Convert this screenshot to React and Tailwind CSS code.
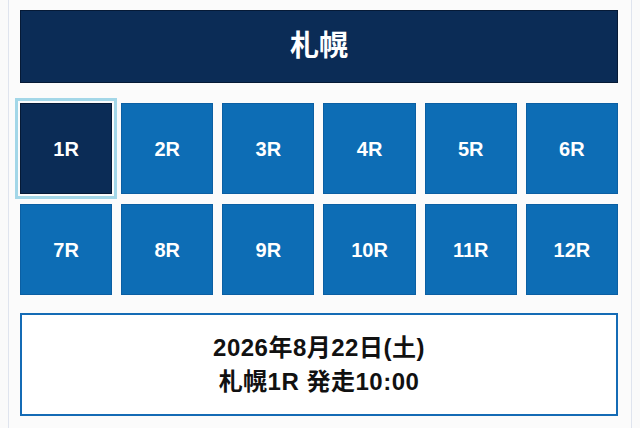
const races = ['1R', '2R', '3R', '4R', '5R', '6R', '7R', '8R', '9R', '10R', '11R', '12R'];

const App = () => {
  const selected = '1R';

  return (
    <div
      className="min-h-[428px] bg-[#fafafa] px-2"
      style={{ fontFamily: '"Liberation Sans", Arial, "Noto Sans CJK JP", sans-serif' }}
    >
      <div className="min-h-[428px] border-x border-[#dfe4ee] bg-[#fbfbfb] pl-[11px] pr-[13px] pt-[10px]">
        {/* Venue header */}
        <div className="flex h-[73px] items-center justify-center border border-[#061a36] bg-[#0b2c56]">
          <h1 className="text-[29px] font-bold text-white">札幌</h1>
        </div>

        {/* Race buttons */}
        <div className="mt-5 grid grid-cols-6 gap-x-[9px] gap-y-[10px]">
          {races.map((race) => (
            <button
              key={race}
              className={
                race === selected
                  ? 'flex h-[91px] items-center justify-center border border-[#061a36] bg-[#0b2c56] text-[20px] font-bold text-white outline-3 outline-offset-2 outline-[#a3d7e8]'
                  : 'flex h-[91px] items-center justify-center border border-[#0b5fa3] bg-[#0d6db5] text-[20px] font-bold text-white'
              }
            >
              {race}
            </button>
          ))}
        </div>

        {/* Race info */}
        <div className="mt-[18px] flex h-[103px] flex-col items-center justify-center border-2 border-[#146bb5] bg-white text-[24px] font-bold leading-[34px] tracking-[0.5px] text-[#111]">
          <p>2026年8月22日(土)</p>
          <p>札幌1R 発走10:00</p>
        </div>
      </div>
    </div>
  );
};

export default App;
